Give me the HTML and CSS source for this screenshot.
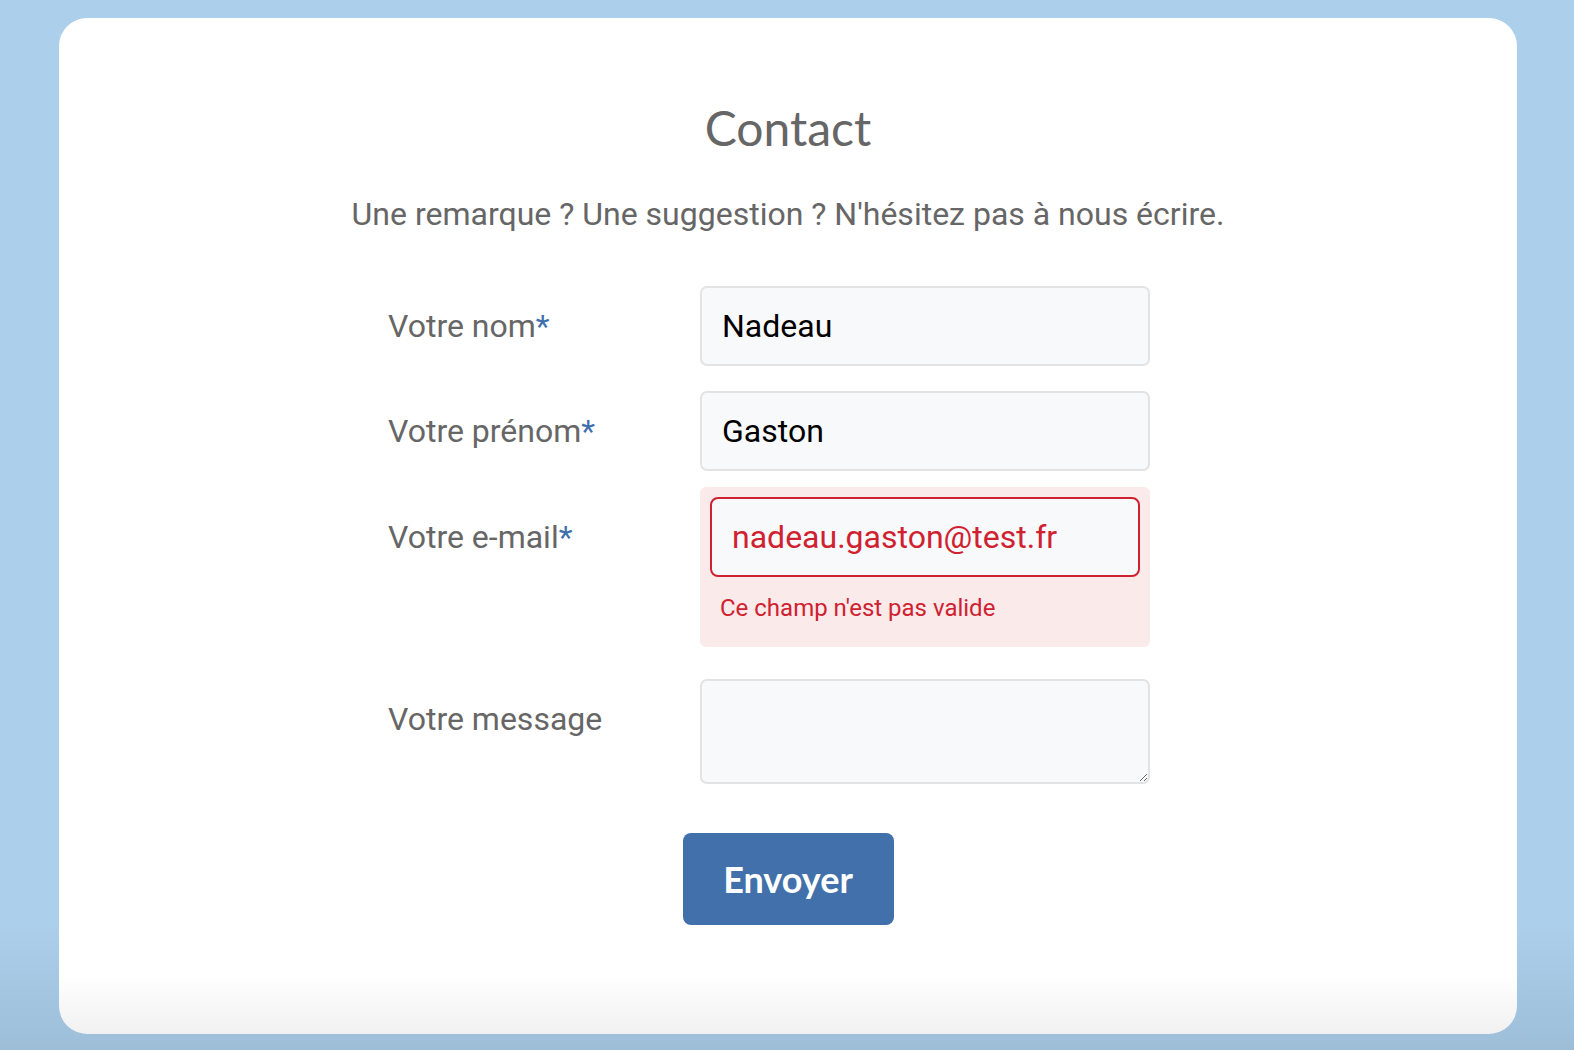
FILE: index.html
```html
<!DOCTYPE html>
<html lang="fr">
<head>
<meta charset="utf-8">
<title>Contact</title>
<link rel="stylesheet" href="styles.css">
</head>
<body>
<main class="card">
  <h1 class="title">Contact</h1>
  <p class="intro">Une remarque ? Une suggestion ? N'hésitez pas à nous écrire.</p>
  <form class="form">
    <div class="row">
      <label class="label" for="nom">Votre nom<span class="req">*</span></label>
      <div class="field"><input class="input" id="nom" type="text" value="Nadeau"></div>
    </div>
    <div class="row row-2">
      <label class="label" for="prenom">Votre prénom<span class="req">*</span></label>
      <div class="field"><input class="input" id="prenom" type="text" value="Gaston"></div>
    </div>
    <div class="row row-3">
      <label class="label label-err" for="email">Votre e-mail<span class="req">*</span></label>
      <div class="field field-err">
        <input class="input input-err" id="email" type="text" value="nadeau.gaston@test.fr">
        <div class="err-msg">Ce champ n'est pas valide</div>
      </div>
    </div>
    <div class="row row-4">
      <label class="label" for="msg">Votre message</label>
      <div class="field"><textarea class="textarea" id="msg"></textarea></div>
    </div>
    <div class="actions">
      <button class="btn" type="button">Envoyer</button>
    </div>
  </form>
</main>
</body>
</html>
```

FILE: styles.css
```css
* { box-sizing: border-box; }
html, body { height: 100%; }
body {
  margin: 0;
  background: linear-gradient(to bottom, #accfeb 0, #accfeb 88%, #9ebed8 100%);
  font-family: Roboto, "Liberation Sans", sans-serif;
  overflow: hidden;
}
.card {
  width: 1458px;
  height: 1016px;
  margin: 18px 0 0 59px;
  border-radius: 28px;
  background: linear-gradient(to bottom, #ffffff 0, #ffffff calc(100% - 60px), #f1f1f1 100%);
  padding-top: 81px;
}
.title {
  margin: 0;
  text-align: center;
  font-family: Lato, "Open Sans", sans-serif;
  font-weight: 400;
  font-size: 48px;
  line-height: 58px;
  color: #666666;
}
.intro {
  margin: 40px 0 0;
  text-align: center;
  font-size: 32px;
  line-height: 34px;
  color: #666666;
}
.form {
  width: 800px;
  margin: 55px auto 0;
}
.row {
  display: grid;
  grid-template-columns: 312px 450px;
  align-items: start;
}
.row-2 { margin-top: 25px; }
.row-3 { margin-top: 16px; }
.row-4 { margin-top: 32px; }
.label {
  font-size: 32px;
  line-height: 80px;
  color: #666666;
}
.label-err { padding-top: 10px; }
.req { color: #3f6fad; }
.input {
  display: block;
  width: 100%;
  height: 80px;
  border: 2px solid #e3e3e3;
  border-radius: 7px;
  background: #f8f9fa;
  padding: 0 20px;
  font-family: Roboto, "Liberation Sans", sans-serif;
  font-size: 32px;
  color: #000000;
  outline: none;
}
.field-err {
  background: #fbeaea;
  border-radius: 6px;
  padding: 10px 10px 26px;
}
.input-err {
  border-color: #cf2130;
  border-radius: 8px;
  color: #cf2130;
}
.err-msg {
  margin-top: 18px;
  padding-left: 10px;
  font-size: 24px;
  line-height: 26px;
  color: #cf2130;
}
.textarea {
  display: block;
  width: 100%;
  height: 105px;
  border: 2px solid #e3e3e3;
  border-radius: 7px;
  background: #f8f9fa;
  font-family: Roboto, "Liberation Sans", sans-serif;
  font-size: 32px;
  outline: none;
}
.actions {
  display: flex;
  justify-content: center;
  margin-top: 49px;
}
.btn {
  width: 211px;
  height: 92px;
  border: none;
  border-radius: 8px;
  background: #4170ab;
  color: #ffffff;
  font-family: Lato, "Open Sans", sans-serif;
  font-weight: 700;
  font-size: 36px;
  cursor: pointer;
}
```
